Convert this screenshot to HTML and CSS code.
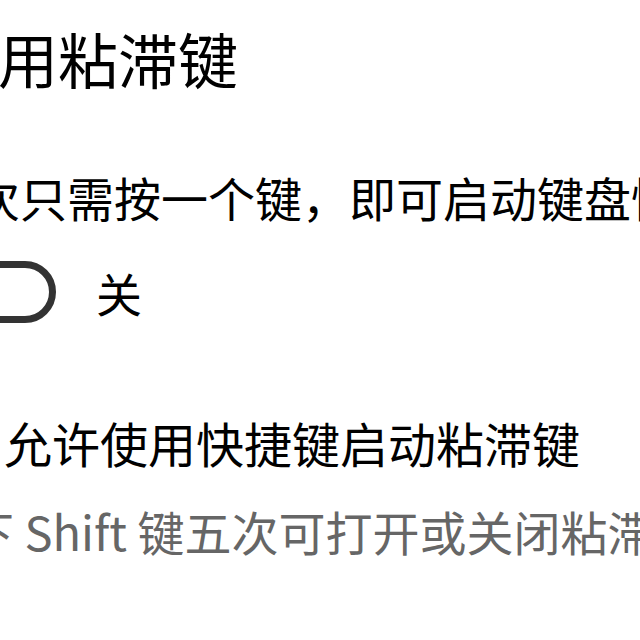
FILE: index.html
```html
<!DOCTYPE html>
<html lang="zh-CN">
<head>
    <meta charset="UTF-8">
    <title>粘滞键</title>
    <link rel="stylesheet" href="styles.css">
</head>
<body>
    <div class="panel">
        <h2 class="title">使用粘滞键</h2>
        <p class="intro">每次只需按一个键，即可启动键盘快捷方式</p>
        <div class="toggleRow">
            <span class="toggle"><span class="knob"></span></span>
            <span class="toggleLabel">关</span>
        </div>
        <label class="checkRow">
            <span class="checkbox"></span>
            <span class="checkLabel">允许使用快捷键启动粘滞键</span>
        </label>
        <p class="hint">按下 Shift 键五次可打开或关闭粘滞键</p>
    </div>
</body>
</html>
```

FILE: styles.css
```css
body {
    margin: 0;
    background: #fff;
    overflow: hidden;
    font-family: "Noto Sans CJK SC", "Noto Sans", sans-serif;
    color: #000;
}

.panel {
    margin-left: -80px;
    width: 1200px;
}

.title {
    margin: 0;
    padding-top: 13px;
    padding-left: 18px;
    font-size: 60px;
    font-weight: 400;
    line-height: 90px;
}

.intro {
    margin: 64px 0 0;
    padding-left: 6px;
    font-size: 47px;
    line-height: 60px;
}

.toggleRow {
    display: flex;
    align-items: center;
    gap: 40px;
    margin-top: 32px;
}

.toggle {
    width: 136px;
    height: 62px;
    box-sizing: border-box;
    border: 7px solid #333;
    border-radius: 31px;
    position: relative;
}

.knob {
    position: absolute;
    left: 10px;
    top: 9px;
    width: 30px;
    height: 30px;
    border-radius: 50%;
    background: #333;
}

.toggleLabel {
    font-size: 46px;
}

.checkRow {
    display: flex;
    align-items: center;
    gap: 22px;
    margin-top: 86px;
}

.checkbox {
    width: 62px;
    height: 62px;
    box-sizing: border-box;
    border: 6px solid #333;
}

.checkLabel {
    font-size: 48px;
    line-height: 60px;
}

.hint {
    margin: 28px 0 0;
    font-size: 47px;
    line-height: 60px;
    color: #666;
}
```
